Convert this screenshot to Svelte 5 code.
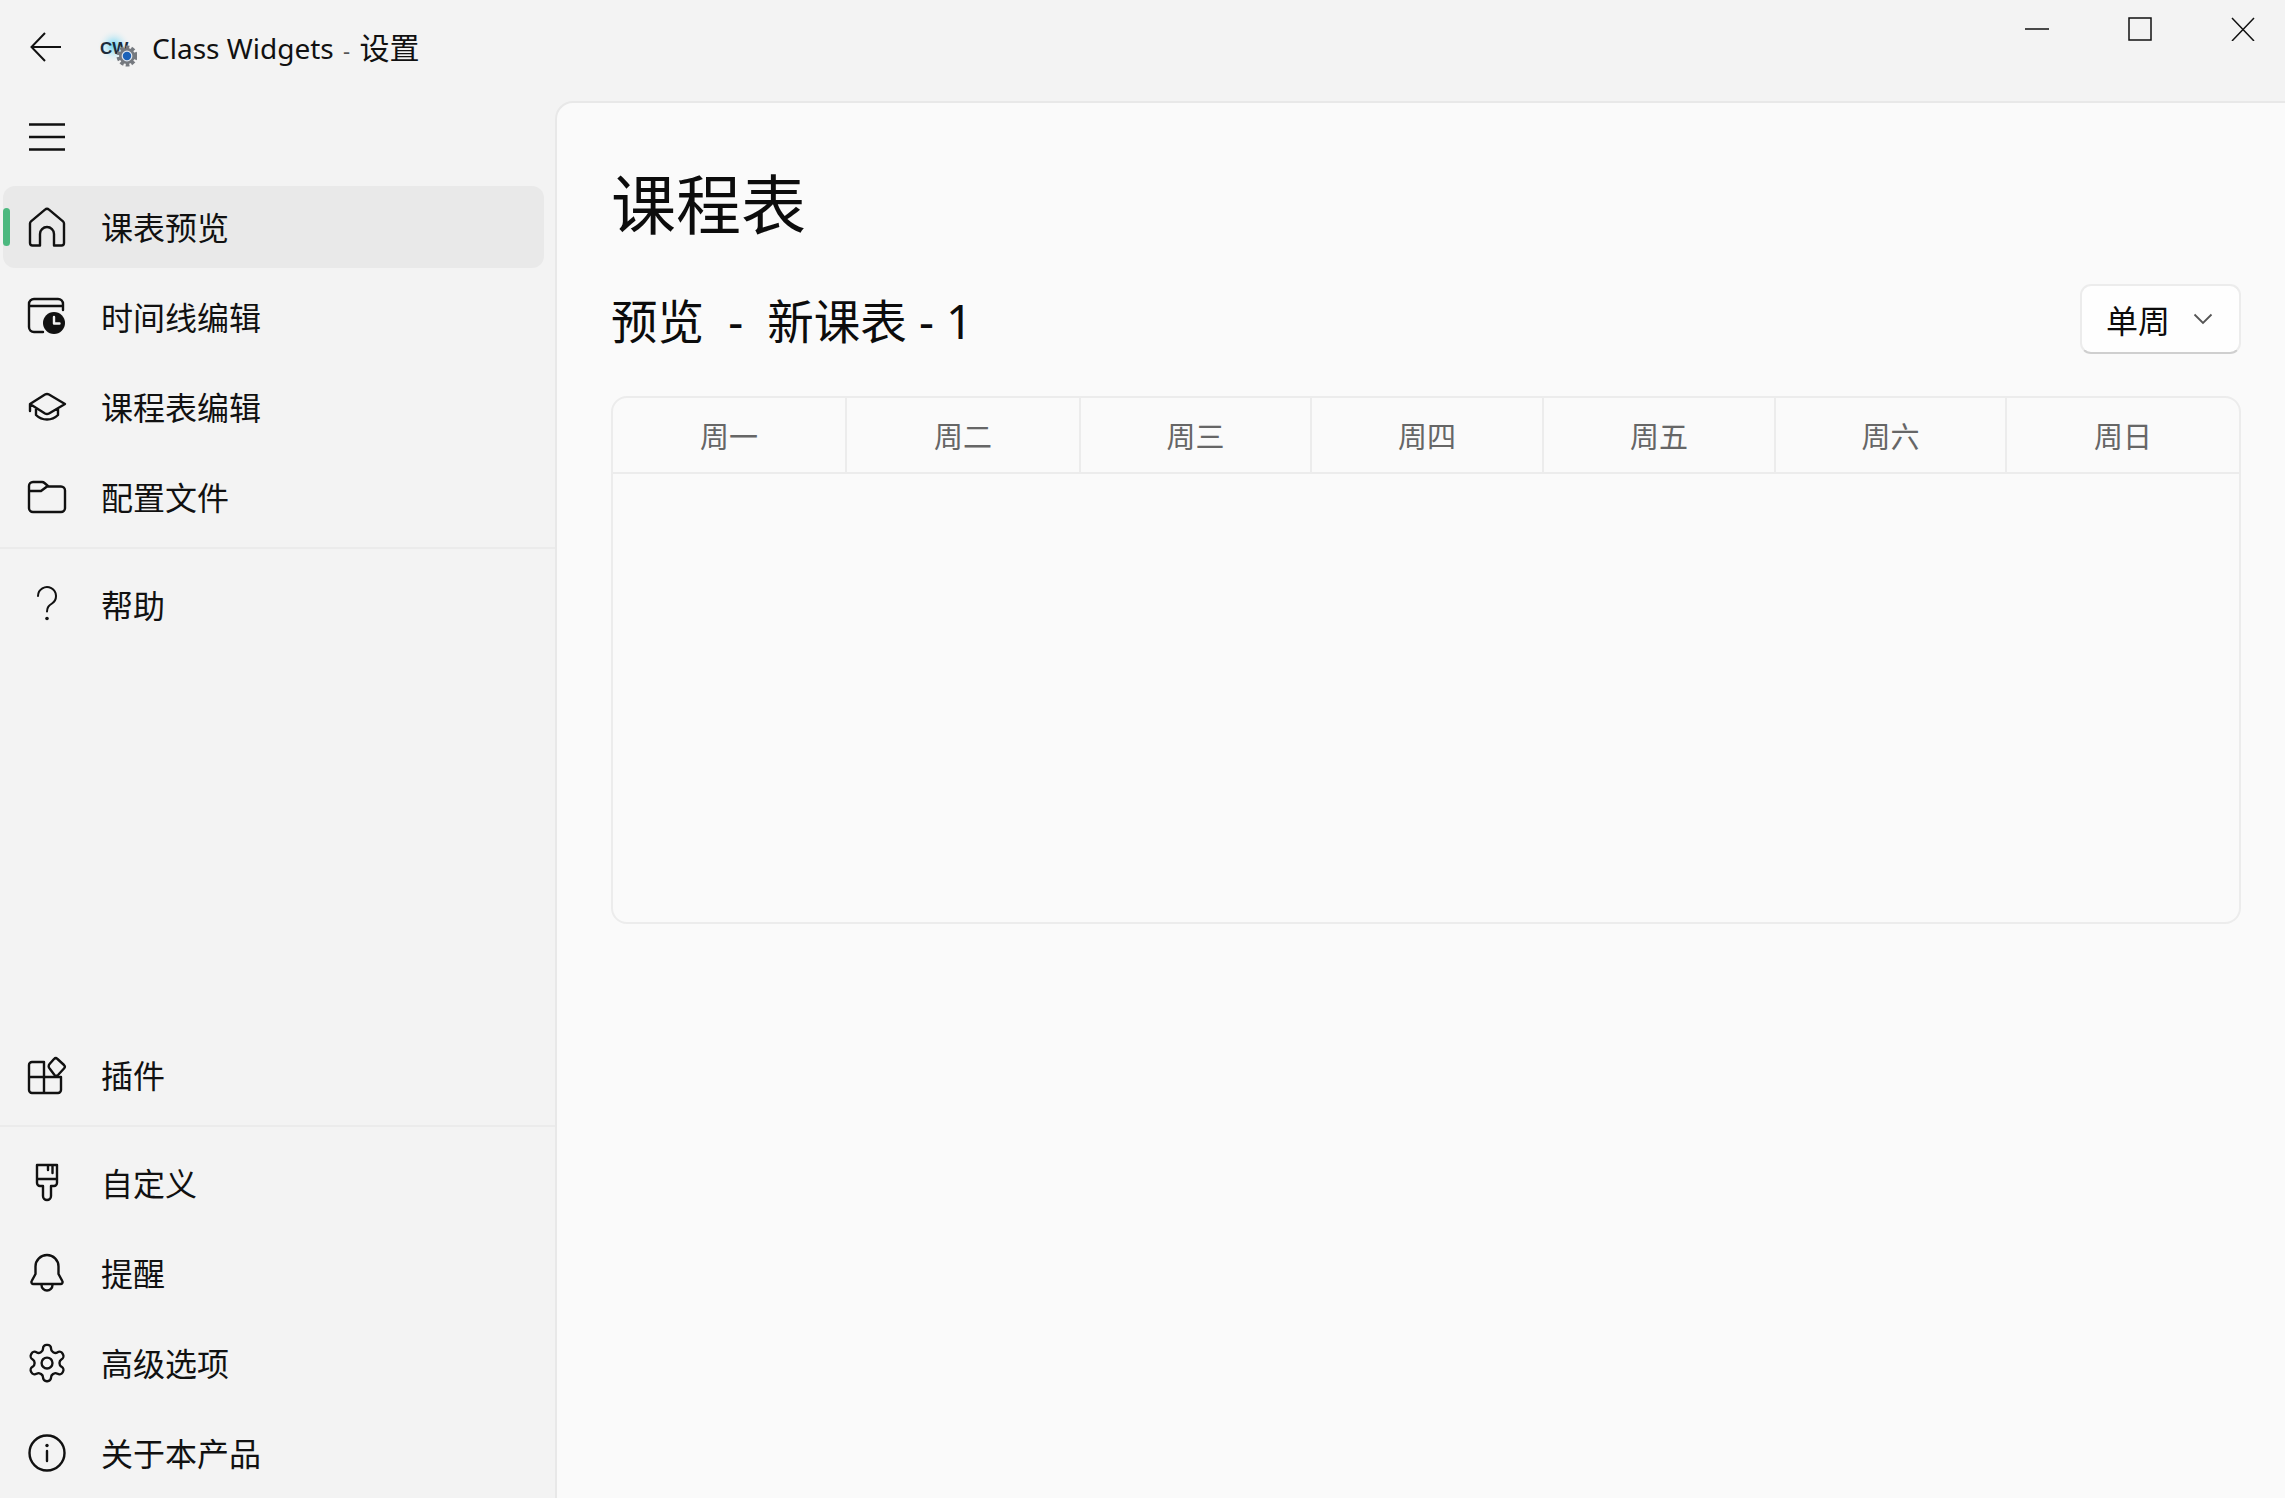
<script lang="ts">
  const topItems = [
    { icon: 'home', label: '课表预览', active: true },
    { icon: 'timeline', label: '时间线编辑' },
    { icon: 'cap', label: '课程表编辑' },
    { icon: 'folder', label: '配置文件' },
  ]
  const bottomItems = [
    { icon: 'brush', label: '自定义' },
    { icon: 'bell', label: '提醒' },
    { icon: 'gear', label: '高级选项' },
    { icon: 'info', label: '关于本产品' },
  ]
  const days = ['周一', '周二', '周三', '周四', '周五', '周六', '周日']
</script>

{#snippet icon(name: string)}
  <svg class="icon" viewBox="0 0 40 40" width="40" height="40" fill="none" stroke="#111" stroke-width="2.4" stroke-linejoin="round" stroke-linecap="round">
    {#if name === 'home'}
      <path d="M3 33V16.5a3 3 0 0 1 1-2.2L18 2.6a3 3 0 0 1 4 0l14 11.7a3 3 0 0 1 1 2.2V36a2.5 2.5 0 0 1-2.5 2.5H27V27a7 7 0 0 0-14 0v11.5H5.500A2.500 2.500 0 0 1 3 36Z" />
    {:else if name === 'timeline'}
      <path d="M16 35H7a5 5 0 0 1-5-5V7a5 5 0 0 1 5-5h24a5 5 0 0 1 5 5v6M2 9h34" />
      <circle cx="27" cy="26" r="11" fill="#111" stroke="none" />
      <path d="M27 20v6.500h5.500" stroke="#f3f3f3" />
    {:else if name === 'cap'}
      <path d="M3 24v-7L18 7.500a4 4 0 0 1 4 0L38 17 22 26.500a4 4 0 0 1-4 0L3 17M9 22v6c3 3 7 4.500 11 4.500s8-1.500 11-4.500v-6" />
    {:else if name === 'folder'}
      <path d="M2 9a4 4 0 0 1 4-4h9a4 4 0 0 1 2.500 1l4 3.500H34a4 4 0 0 1 4 4V31a4 4 0 0 1-4 4H6a4 4 0 0 1-4-4ZM2 14h12l6-4.500" />
    {:else if name === 'help'}
      <path d="M11 11a9 9 0 1 1 14 7.500c-3 2-5 3.500-5 8" stroke-width="2" />
      <circle cx="20" cy="33.500" r="1.800" fill="#111" stroke="none" />
    {:else if name === 'plugin'}
      <path d="M17 7H5a3 3 0 0 0-3 3v25a3 3 0 0 0 3 3h26a3 3 0 0 0 3-3V22H17ZM17 22H2M17 22v16M34 22h-5" />
      <path d="M23 8.500 27 4a2.500 2.500 0 0 1 3.500 0L37 10a2.500 2.500 0 0 1 0 3.500L31 20a2.500 2.500 0 0 1-3.500 0L23 14a3.500 3.500 0 0 1 0-5.500Z" />
    {:else if name === 'brush'}
      <path d="M10 2h20v18a3 3 0 0 1-3 3h-3v10a4 4 0 0 1-8 0V23h-3a3 3 0 0 1-3-3ZM10 16h20M21 2v5M25.500 2v8" />
    {:else if name === 'bell'}
      <path d="M20 2a11.500 11.500 0 0 0-11.500 11.500V21l-3.800 7a2 2 0 0 0 1.800 3h27a2 2 0 0 0 1.800-3L31.500 21v-7.500A11.500 11.500 0 0 0 20 2ZM14.500 32a5.500 5.500 0 0 0 11 0" />
    {:else if name === 'gear'}
      <g transform="translate(-1.800 -1.800) scale(1.820)" stroke-width="1.300">
        <path d="M12.220 2h-.44a2 2 0 0 0-2 2v.18a2 2 0 0 1-1 1.730l-.43.25a2 2 0 0 1-2 0l-.15-.08a2 2 0 0 0-2.730.73l-.22.38a2 2 0 0 0 .73 2.730l.15.1a2 2 0 0 1 1 1.720v.51a2 2 0 0 1-1 1.740l-.15.09a2 2 0 0 0-.73 2.730l.22.38a2 2 0 0 0 2.730.73l.15-.08a2 2 0 0 1 2 0l.43.25a2 2 0 0 1 1 1.730V20a2 2 0 0 0 2 2h.44a2 2 0 0 0 2-2v-.18a2 2 0 0 1 1-1.730l.43-.25a2 2 0 0 1 2 0l.15.08a2 2 0 0 0 2.730-.73l.22-.39a2 2 0 0 0-.73-2.730l-.15-.08a2 2 0 0 1-1-1.740v-.5a2 2 0 0 1 1-1.740l.15-.09a2 2 0 0 0 .73-2.730l-.22-.38a2 2 0 0 0-2.730-.73l-.15.08a2 2 0 0 1-2 0l-.43-.25a2 2 0 0 1-1-1.730V4a2 2 0 0 0-2-2z" />
        <circle cx="12" cy="12" r="3" />
      </g>
    {:else if name === 'info'}
      <circle cx="20" cy="20" r="17.500" />
      <path d="M20 18v10" />
      <circle cx="20" cy="12.500" r="1.700" fill="#111" stroke="none" />
    {/if}
  </svg>
{/snippet}

{#snippet navItem(item: { icon: string; label: string; active?: boolean })}
  <div class="nav-item" class:active={item.active}>
    {#if item.active}<span class="indicator"></span>{/if}
    {@render icon(item.icon)}
    <span class="nav-label">{item.label}</span>
  </div>
{/snippet}

<div class="window">
  <header class="titlebar">
    <svg class="back" viewBox="0 0 32 32" width="32" height="32" fill="none" stroke="#111" stroke-width="2">
      <path d="M31 16H2M15 2 1.500 16 15 30" />
    </svg>
    <svg class="logo" viewBox="0 0 40 40" width="40" height="40">
      <defs>
        <radialGradient id="glow">
          <stop offset="0" stop-color="#5fd3f5" />
          <stop offset="1" stop-color="#f3f3f3" stop-opacity="0" />
        </radialGradient>
      </defs>
      <circle cx="17" cy="16" r="17" fill="url(#glow)" />
      <text x="3" y="24" class="logo-text">CW</text>
      <circle cx="30" cy="26" r="8.500" fill="none" stroke="#75797f" stroke-width="4" stroke-dasharray="3.500 2" />
      <circle cx="30" cy="26" r="8" fill="#75797f" />
      <circle cx="30" cy="26" r="4.800" fill="#1b62b8" stroke="#dfe6ee" stroke-width="1.200" />
    </svg>
    <span class="app-title">Class Widgets <span class="dash">-</span> <span class="cjk">设置</span></span>
    <div class="win-controls">
      <svg viewBox="0 0 24 24" width="24" height="24"><path d="M0 12h24" stroke="#111" stroke-width="1.500" /></svg>
      <svg viewBox="0 0 24 24" width="24" height="24"><rect x="1" y="1" width="22" height="22" fill="none" stroke="#111" stroke-width="1.500" /></svg>
      <svg viewBox="0 0 24 24" width="24" height="24"><path d="M1 1l22 23M23 1 1 24" stroke="#111" stroke-width="1.500" /></svg>
    </div>
  </header>

  <div class="body">
    <nav class="sidebar">
      <div class="menu">
        <svg viewBox="0 0 36 28" width="36" height="28" fill="none" stroke="#111" stroke-width="2.500"><path d="M0 1.500h36M0 14h36M0 26.500h36" /></svg>
      </div>
      <div class="group first">
        {#each topItems as item}
          {@render navItem(item)}
        {/each}
      </div>
      <div class="divider"></div>
      {@render navItem({ icon: 'help', label: '帮助' })}
      <div class="spacer"></div>
      {@render navItem({ icon: 'plugin', label: '插件' })}
      <div class="divider"></div>
      <div class="group">
        {#each bottomItems as item}
          {@render navItem(item)}
        {/each}
      </div>
    </nav>

    <main class="panel">
      <h1>课程表</h1>
      <div class="sub-row">
        <h2>预览 &nbsp;-&nbsp; 新课表 - 1</h2>
        <div class="dropdown">
          <span>单周</span>
          <svg viewBox="0 0 20 12" width="20" height="12" fill="none" stroke="#555" stroke-width="1.800"><path d="M1.500 1.500 10 10l8.500-8.500" /></svg>
        </div>
      </div>
      <div class="table">
        <div class="thead">
          {#each days as d}
            <div class="th">{d}</div>
          {/each}
        </div>
      </div>
    </main>
  </div>
</div>

<style>
  :global(body) {
    margin: 0;
    background: #f3f3f3;
  }
  .window {
    width: 2285px;
    height: 1498px;
    display: flex;
    flex-direction: column;
    overflow: hidden;
    background: #f3f3f3;
    color: #111;
    font-family: "Noto Sans", "Noto Sans CJK SC", sans-serif;
  }
  .titlebar {
    height: 101px;
    flex: none;
    display: flex;
    align-items: flex-start;
  }
  .back {
    margin: 31px 0 0 30px;
  }
  .logo {
    margin: 30px 0 0 35px;
  }
  .logo-text {
    font-family: "Liberation Sans", sans-serif;
    font-weight: 700;
    font-size: 17px;
    fill: #1c2a3a;
  }
  .app-title {
    margin: 26px 0 0 15px;
    font-size: 28px;
    line-height: 44px;
    white-space: nowrap;
  }
  .dash {
    color: #555;
    font-size: 22px;
    margin: 0 2px;
  }
  .cjk {
    font-size: 30px;
  }
  .win-controls {
    margin-left: auto;
    margin-right: 30px;
    margin-top: 17px;
    display: flex;
    gap: 79px;
  }
  .body {
    flex: 1;
    display: flex;
    min-height: 0;
  }
  .sidebar {
    width: 555px;
    flex: none;
    display: flex;
    flex-direction: column;
    padding-bottom: 4px;
    box-sizing: border-box;
  }
  .menu {
    height: 71px;
    flex: none;
    display: flex;
    align-items: center;
    padding-left: 29px;
  }
  .group {
    display: flex;
    flex-direction: column;
    gap: 8px;
  }
  .group.first {
    margin-top: 14px;
  }
  .divider {
    height: 2px;
    flex: none;
    background: #ebebeb;
    margin: 9px 0 15px;
  }
  .spacer {
    flex: 1;
  }
  .nav-item {
    position: relative;
    height: 82px;
    width: 541px;
    flex: none;
    margin-left: 3px;
    display: flex;
    align-items: center;
    padding-left: 24px;
    box-sizing: border-box;
    border-radius: 12px;
  }
  .nav-item.active {
    background: #e9e9e9;
  }
  .indicator {
    position: absolute;
    left: 0;
    top: 22px;
    width: 7px;
    height: 38px;
    border-radius: 4px;
    background: #4cb87f;
  }
  .nav-label {
    margin-left: 34px;
    padding-top: 1px;
    font-size: 32px;
    line-height: 44px;
    white-space: nowrap;
  }
  .icon {
    flex: none;
  }
  .panel {
    flex: 1;
    min-width: 0;
    background: #fafafa;
    border: 2px solid #e8e8e8;
    border-right: none;
    border-bottom: none;
    border-top-left-radius: 18px;
    padding: 61px 44px 0 54px;
    box-sizing: border-box;
  }
  h1 {
    margin: 0;
    font-size: 65px;
    font-weight: 400;
    line-height: 80px;
    color: #0c0c0c;
  }
  .sub-row {
    margin-top: 40px;
    height: 70px;
    display: flex;
    align-items: center;
    justify-content: space-between;
  }
  h2 {
    margin: 4px 0 0;
    font-size: 46.5px;
    font-weight: 400;
    line-height: 56px;
    white-space: nowrap;
    color: #0c0c0c;
  }
  .dropdown {
    width: 161px;
    height: 70px;
    box-sizing: border-box;
    display: flex;
    align-items: center;
    padding-left: 24px;
    gap: 23px;
    background: #fefefe;
    border: 2px solid #ececec;
    border-bottom-color: #cfcfcf;
    border-radius: 11px;
    font-size: 32px;
    color: #0c0c0c;
  }
  .table {
    margin-top: 42px;
    height: 528px;
    border: 2px solid #ececec;
    border-radius: 16px;
    box-sizing: border-box;
  }
  .thead {
    height: 76px;
    display: grid;
    grid-template-columns: 232px 234px 231px 232px 232px 231px 1fr;
    border-bottom: 2px solid #ececec;
    box-sizing: border-box;
  }
  .th {
    display: flex;
    align-items: center;
    justify-content: center;
    font-size: 29px;
    color: #666;
    border-left: 2px solid #ececec;
  }
  .th:first-child {
    border-left: none;
  }
</style>
